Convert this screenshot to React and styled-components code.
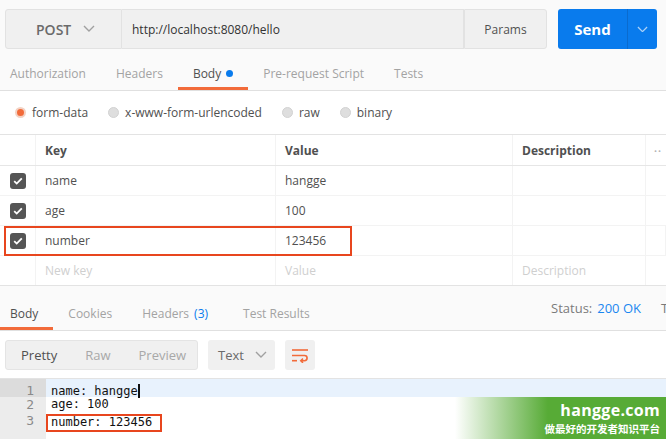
import { createGlobalStyle, styled } from "styled-components";

const GlobalStyle = createGlobalStyle`
  html, body {
    margin: 0;
    padding: 0;
    background: #fafafa;
  }
  body {
    font-family: "Open Sans", "Liberation Sans", sans-serif;
    font-size: 12px;
    color: #505050;
  }
`;

const Chevron = ({ color = "#a0a0a0", size = 12 }) => (
  <svg width={size} height={size * 0.6} viewBox="0 0 12 7" fill="none">
    <path d="M1 1l5 5 5-5" stroke={color} strokeWidth="1.4" />
  </svg>
);

const Check = () => (
  <svg width="10" height="8" viewBox="0 0 10 8" fill="none">
    <path d="M1.2 4.2l2.5 2.4L8.8 1.4" stroke="#fff" strokeWidth="1.8" />
  </svg>
);

const WrapIcon = () => (
  <svg width="18" height="15" viewBox="0 0 18 15" fill="none" stroke="#f26b3a" strokeWidth="1.6">
    <path d="M1 2h16" />
    <path d="M1 7.5h12.5a2.6 2.6 0 0 1 0 5.2H10" />
    <path d="M12 10.6l-2.2 2.1 2.2 2.1" />
    <path d="M1 12.7h5" />
  </svg>
);

const rows = [
  { key: "name", value: "hangge" },
  { key: "age", value: "100" },
  { key: "number", value: "123456", marked: true },
];

const App = () => {
  return (
    <Page>
      <GlobalStyle />
      <TopBar>
        <Method>
          POST
          <Chevron />
        </Method>
        <UrlBox>http://localhost:8080/hello</UrlBox>
        <ParamsButton>Params</ParamsButton>
        <SendGroup>
          <SendMain>Send</SendMain>
          <SendArrow>
            <Chevron color="#a9d0f7" size={11} />
          </SendArrow>
        </SendGroup>
      </TopBar>

      <TabRow>
        <Tab>Authorization</Tab>
        <Tab>Headers</Tab>
        <Tab $active>
          Body <Dot />
        </Tab>
        <Tab>Pre-request Script</Tab>
        <Tab>Tests</Tab>
      </TabRow>

      <BodyPanel>
        <RadioRow>
          <RadioItem>
            <Radio $on />
            form-data
          </RadioItem>
          <RadioItem>
            <Radio />
            x-www-form-urlencoded
          </RadioItem>
          <RadioItem>
            <Radio />
            raw
          </RadioItem>
          <RadioItem>
            <Radio />
            binary
          </RadioItem>
        </RadioRow>

        <Table>
          <HeadRow>
            <Cell />
            <HeadCell>Key</HeadCell>
            <HeadCell>Value</HeadCell>
            <HeadCell>Description</HeadCell>
            <MoreCell>••</MoreCell>
          </HeadRow>
          {rows.map((row) => (
            <Row key={row.key}>
              <Cell $center>
                <CheckBox>
                  <Check />
                </CheckBox>
              </Cell>
              <Cell>{row.key}</Cell>
              <Cell>{row.value}</Cell>
              <Cell />
              <Cell />
              {row.marked && <Marker />}
            </Row>
          ))}
          <Row>
            <Cell />
            <Cell $placeholder>New key</Cell>
            <Cell $placeholder>Value</Cell>
            <Cell $placeholder>Description</Cell>
            <Cell />
          </Row>
        </Table>
      </BodyPanel>

      <ResponseTabs>
        <Tab $active>Body</Tab>
        <Tab>Cookies</Tab>
        <Tab>
          Headers <Count>(3)</Count>
        </Tab>
        <Tab $wide>Test Results</Tab>
        <Status>
          Status: <StatusValue>200 OK</StatusValue>
          <TimeLabel>T</TimeLabel>
        </Status>
      </ResponseTabs>

      <ResponsePanel>
        <Toolbar>
          <ViewGroup>
            <ViewButton $active>Pretty</ViewButton>
            <ViewButton>Raw</ViewButton>
            <ViewButton>Preview</ViewButton>
          </ViewGroup>
          <FormatSelect>
            Text
            <Chevron />
          </FormatSelect>
          <IconButton>
            <WrapIcon />
          </IconButton>
        </Toolbar>

        <Editor>
          <CodeLine $current>
            <LineNo $current>1</LineNo>
            <Code>
              name: hangge
              <Caret />
            </Code>
          </CodeLine>
          <CodeLine>
            <LineNo>2</LineNo>
            <Code>age: 100</Code>
          </CodeLine>
          <CodeLine>
            <LineNo>3</LineNo>
            <Code>
              <CodeMark>number: 123456</CodeMark>
            </Code>
          </CodeLine>
          <CodeLine>
            <LineNo />
            <Code />
          </CodeLine>
        </Editor>
      </ResponsePanel>

      <Watermark>
        <WatermarkTitle>hangge.com</WatermarkTitle>
        <WatermarkSub>做最好的开发者知识平台</WatermarkSub>
      </Watermark>
    </Page>
  );
};

export default App;

const Page = styled.div`
  position: relative;
  width: 666px;
  height: 439px;
  overflow: hidden;
  background: #fafafa;
`;

const TopBar = styled.div`
  display: flex;
  height: 40px;
  padding: 9px 9px 0 5px;
`;

const Method = styled.div`
  width: 117px;
  box-sizing: border-box;
  display: flex;
  align-items: center;
  gap: 12px;
  padding-left: 30px;
  font-size: 14px;
  font-weight: 600;
  color: #6a6a6a;
  background: #f0f0f0;
  border: 1px solid #e2e2e2;
  border-radius: 3px 0 0 3px;
`;

const UrlBox = styled.div`
  flex: 1;
  display: flex;
  align-items: center;
  padding-left: 10px;
  color: #333;
  background: #f0f0f0;
  border: 1px solid #e2e2e2;
  border-left: none;
`;

const ParamsButton = styled.div`
  width: 81px;
  display: flex;
  align-items: center;
  justify-content: center;
  color: #505050;
  background: #f0f0f0;
  border: 1px solid #e2e2e2;
  border-radius: 0 3px 3px 0;
`;

const SendGroup = styled.div`
  display: flex;
  width: 99px;
  margin-left: 11px;
  background: #097bed;
  border-radius: 3px;
  overflow: hidden;
`;

const SendMain = styled.div`
  flex: 1;
  display: flex;
  align-items: center;
  justify-content: center;
  color: #fff;
  font-size: 15px;
  font-weight: 700;
  border-right: 1px solid #0a6bcf;
`;

const SendArrow = styled.div`
  width: 29px;
  display: flex;
  align-items: center;
  justify-content: center;
`;

const TabRow = styled.div`
  display: flex;
  align-items: flex-end;
  height: 41px;
  margin-left: -5px;
  border-bottom: 1px solid #e0e0e0;
`;

const Tab = styled.div`
  display: flex;
  align-items: center;
  gap: 5px;
  height: 28px;
  padding: 0 15px 0 ${(p) => (p.$wide ? "20px" : "15px")};
  color: ${(p) => (p.$active ? "#505050" : "#a3a3a3")};
  border-bottom: 3px solid ${(p) => (p.$active ? "#f26b3a" : "transparent")};
  white-space: nowrap;
`;

const Dot = styled.span`
  width: 7px;
  height: 7px;
  border-radius: 50%;
  background: #097bed;
`;

const BodyPanel = styled.div`
  background: #fff;
`;

const RadioRow = styled.div`
  display: flex;
  align-items: center;
  gap: 20px;
  height: 43px;
  padding-left: 15px;
`;

const RadioItem = styled.label`
  display: flex;
  align-items: center;
  gap: 6px;
  color: #505050;
`;

const Radio = styled.span`
  width: 11px;
  height: 11px;
  box-sizing: border-box;
  border-radius: 50%;
  background: ${(p) => (p.$on ? "#f26b3a" : "#dedede")};
  border: ${(p) => (p.$on ? "2px solid #f3d2c4" : "1px solid #d2d2d2")};
`;

const Table = styled.div`
  border-top: 1px solid #e3e3e3;
  border-bottom: 1px solid #e3e3e3;
`;

const gridColumns = "36px 240px 237px 133px 20px";

const HeadRow = styled.div`
  display: grid;
  grid-template-columns: ${gridColumns};
  height: 30px;
  border-bottom: 1px solid #e6e6e6;
`;

const Row = styled.div`
  position: relative;
  display: grid;
  grid-template-columns: ${gridColumns};
  height: 29px;
  border-bottom: 1px solid #f3f3f3;

  &:last-child {
    border-bottom: none;
  }
`;

const Cell = styled.div`
  display: flex;
  align-items: center;
  justify-content: ${(p) => (p.$center ? "center" : "flex-start")};
  padding-left: ${(p) => (p.$center ? "0" : "9px")};
  border-right: 1px solid #f3f3f3;
  color: ${(p) => (p.$placeholder ? "#cfcfcf" : "#505050")};
  white-space: nowrap;
  overflow: hidden;

  &:last-child {
    border-right: none;
  }
`;

const HeadCell = styled(Cell)`
  font-weight: 700;
`;

const MoreCell = styled(Cell)`
  padding-left: 8px;
  font-size: 8px;
  letter-spacing: 1px;
  color: #b5b5b5;
`;

const CheckBox = styled.span`
  display: flex;
  align-items: center;
  justify-content: center;
  width: 16px;
  height: 16px;
  border-radius: 3px;
  background: #555;
`;

const Marker = styled.span`
  position: absolute;
  left: 4px;
  top: 0px;
  width: 348px;
  height: 30px;
  box-sizing: border-box;
  border: 2px solid #e8461e;
  pointer-events: none;
`;

const ResponseTabs = styled.div`
  display: flex;
  align-items: flex-end;
  height: 44px;
  margin-left: -5px;
  border-bottom: 1px solid #e0e0e0;
`;

const Count = styled.span`
  color: #097bed;
`;

const Status = styled.div`
  display: flex;
  align-items: center;
  gap: 5px;
  height: 30px;
  margin-left: auto;
  padding-bottom: 7px;
  font-size: 13px;
  color: #7a7a7a;
  white-space: nowrap;
`;

const StatusValue = styled.span`
  color: #1a87f0;
  margin-right: 15px;
`;

const TimeLabel = styled.span`
  width: 5px;
`;

const ResponsePanel = styled.div`
  background: #fff;
  height: 108px;
`;

const Toolbar = styled.div`
  display: flex;
  gap: 10px;
  height: 30px;
  padding: 9px 0 8px 5px;
`;

const ViewGroup = styled.div`
  display: flex;
  gap: 28px;
  width: 193px;
  box-sizing: border-box;
  padding-left: 15px;
  background: #f0f0f0;
  border: 1px solid #e4e4e4;
  border-radius: 3px;
`;

const ViewButton = styled.div`
  display: flex;
  align-items: center;
  font-size: 13px;
  color: ${(p) => (p.$active ? "#505050" : "#a8a8a8")};
`;

const FormatSelect = styled.div`
  display: flex;
  align-items: center;
  gap: 11px;
  width: 67px;
  box-sizing: border-box;
  padding-left: 10px;
  font-size: 13px;
  color: #6a6a6a;
  background: #f0f0f0;
  border-radius: 3px;
`;

const IconButton = styled.div`
  display: flex;
  align-items: center;
  justify-content: center;
  width: 30px;
  background: #f0f0f0;
  border-radius: 3px;
`;

const Editor = styled.div`
  border-top: 1px solid #e3e3e3;
  font-family: "DejaVu Sans Mono", "Liberation Mono", monospace;
  font-size: 12px;
  color: #111;
`;

const CodeLine = styled.div`
  display: flex;
  height: 15.5px;
  line-height: 15.5px;
  background: ${(p) => (p.$current ? "#e8f2fd" : "transparent")};

  &:first-child {
    height: 18px;
    line-height: 18px;
  }
`;

const LineNo = styled.div`
  width: 46px;
  box-sizing: border-box;
  padding-right: 12px;
  text-align: right;
  color: #8a8a8a;
  font-size: 13px;
  background: ${(p) => (p.$current ? "#dcdcdc" : "#ececec")};

  ${CodeLine}:first-child & {
    padding-top: 3px;
  }
`;

const Code = styled.div`
  display: flex;
  align-items: flex-start;
  padding-left: 5px;
  white-space: pre;

  ${CodeLine}:first-child & {
    padding-top: 3px;
  }
`;

const Caret = styled.span`
  width: 2px;
  height: 14px;
  margin-top: 2px;
  background: #111;
`;

const CodeMark = styled.span`
  display: inline-block;
  margin: 1px 0 0 -5px;
  padding: 0 8px 1px 3px;
  line-height: 13px;
  border: 2px solid #e8461e;
`;

const Watermark = styled.div`
  position: absolute;
  right: 0;
  bottom: 0;
  width: 211px;
  height: 42px;
  box-sizing: border-box;
  padding-right: 6px;
  display: flex;
  flex-direction: column;
  align-items: flex-end;
  justify-content: center;
  background: linear-gradient(to right, rgba(90, 170, 55, 0) 0%, #57ab36 44%);
  color: #fff;
`;

const WatermarkTitle = styled.div`
  font-family: "Open Sans", "Liberation Sans", sans-serif;
  font-size: 16px;
  font-weight: 700;
  line-height: 21px;
  letter-spacing: 0.3px;
`;

const WatermarkSub = styled.div`
  font-family: "Noto Sans CJK SC", sans-serif;
  font-size: 10.5px;
  font-weight: 700;
  line-height: 15px;
`;
